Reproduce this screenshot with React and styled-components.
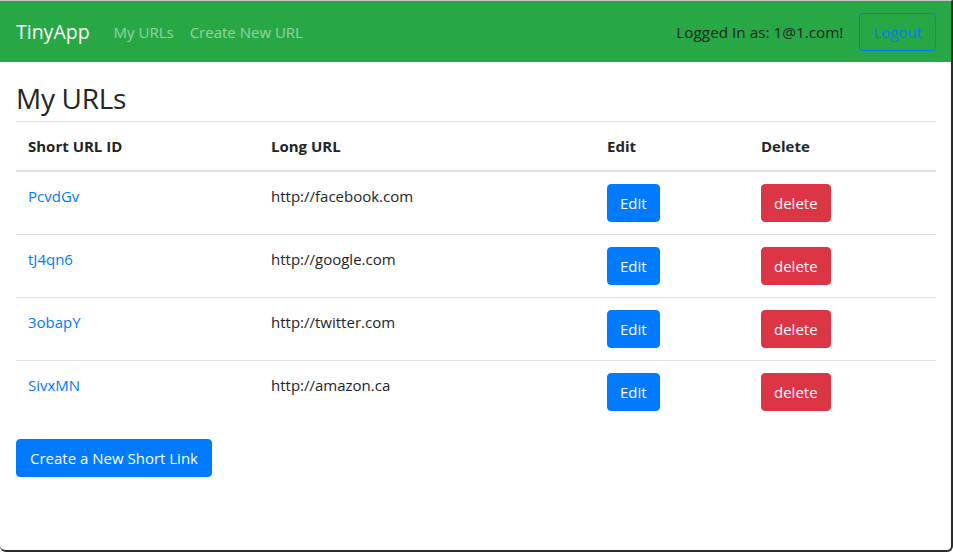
import React from 'react';
import styled, { createGlobalStyle } from 'styled-components';

const GlobalStyle = createGlobalStyle`
  * { box-sizing: border-box; }
  body {
    margin: 0;
    font-family: "Open Sans", "Noto Sans", sans-serif;
    color: #212529;
    background: #fff;
  }
`;

const Frame = styled.div`
  width: 953px;
  height: 552px;
  border-top: 1px solid #c9c9c9;
  border-right: 2px solid #2b2b2b;
  border-bottom: 2px solid #2b2b2b;
  border-radius: 0 0 6px 6px;
  overflow: hidden;
`;

const Navbar = styled.nav`
  height: 61px;
  background: #28a745;
  display: flex;
  align-items: center;
  padding: 0 15px 0 16px;
`;

const Brand = styled.a`
  font-size: 19.5px;
  color: #fff;
  margin-right: 24px;
`;

const NavLink = styled.a`
  font-size: 15px;
  color: rgba(255, 255, 255, 0.5);
  margin-right: 16px;
`;

const Spacer = styled.div`
  flex: 1;
`;

const UserText = styled.span`
  font-size: 15.3px;
  color: #212529;
  margin-right: 16px;
`;

const OutlineButton = styled.button`
  font-family: inherit;
  font-size: 15px;
  color: #007bff;
  background: transparent;
  border: 1px solid #007bff;
  border-radius: 4px;
  height: 38px;
  padding: 0 13px;
`;

const Main = styled.main`
  padding: 0 16px;
`;

const Title = styled.h3`
  font-size: 28px;
  font-weight: 500;
  margin: 0;
  height: 59px;
  line-height: 1;
  display: flex;
  align-items: center;
  padding-top: 12px;
  letter-spacing: -0.3px;
`;

const Table = styled.table`
  width: 920px;
  border-collapse: collapse;
  font-size: 15px;
`;

const Th = styled.th`
  text-align: left;
  font-weight: 700;
  width: ${p => p.$w}px;
  padding: 12px;
  height: 49px;
  border-top: 1px solid #dee2e6;
  border-bottom: 2px solid #dee2e6;
`;

const Td = styled.td`
  padding: 12px;
  vertical-align: top;
  line-height: 24px;
  border-top: ${p => (p.$first ? 'none' : '1px solid #dee2e6')};
`;

const IdLink = styled.a`
  color: #007bff;
`;

const Button = styled.button`
  display: block;
  font-family: inherit;
  font-size: 15px;
  color: #fff;
  background: ${p => (p.$danger ? '#dc3545' : '#007bff')};
  border: 1px solid ${p => (p.$danger ? '#dc3545' : '#007bff')};
  border-radius: 4px;
  height: 38px;
  padding: 0 12px;
`;

const CreateButton = styled(Button)`
  margin-top: 16px;
  padding: 0 13px;
`;

const urls = [
  { id: 'PcvdGv', long: 'http://facebook.com' },
  { id: 'tJ4qn6', long: 'http://google.com' },
  { id: '3obapY', long: 'http://twitter.com' },
  { id: 'SivxMN', long: 'http://amazon.ca' },
];

export default function App() {
  return (
    <Frame>
      <GlobalStyle />
      <Navbar>
        <Brand>TinyApp</Brand>
        <NavLink>My URLs</NavLink>
        <NavLink>Create New URL</NavLink>
        <Spacer />
        <UserText>Logged In as: 1@1.com!</UserText>
        <OutlineButton>Logout</OutlineButton>
      </Navbar>
      <Main>
        <Title>My URLs</Title>
        <Table>
          <thead>
            <tr>
              <Th $w={243}>Short URL ID</Th>
              <Th $w={336}>Long URL</Th>
              <Th $w={154}>Edit</Th>
              <Th $w={187}>Delete</Th>
            </tr>
          </thead>
          <tbody>
            {urls.map((u, i) => (
              <tr key={u.id}>
                <Td $first={i === 0}><IdLink>{u.id}</IdLink></Td>
                <Td $first={i === 0}>{u.long}</Td>
                <Td $first={i === 0}><Button>Edit</Button></Td>
                <Td $first={i === 0}><Button $danger>delete</Button></Td>
              </tr>
            ))}
          </tbody>
        </Table>
        <CreateButton>Create a New Short Link</CreateButton>
      </Main>
    </Frame>
  );
}
